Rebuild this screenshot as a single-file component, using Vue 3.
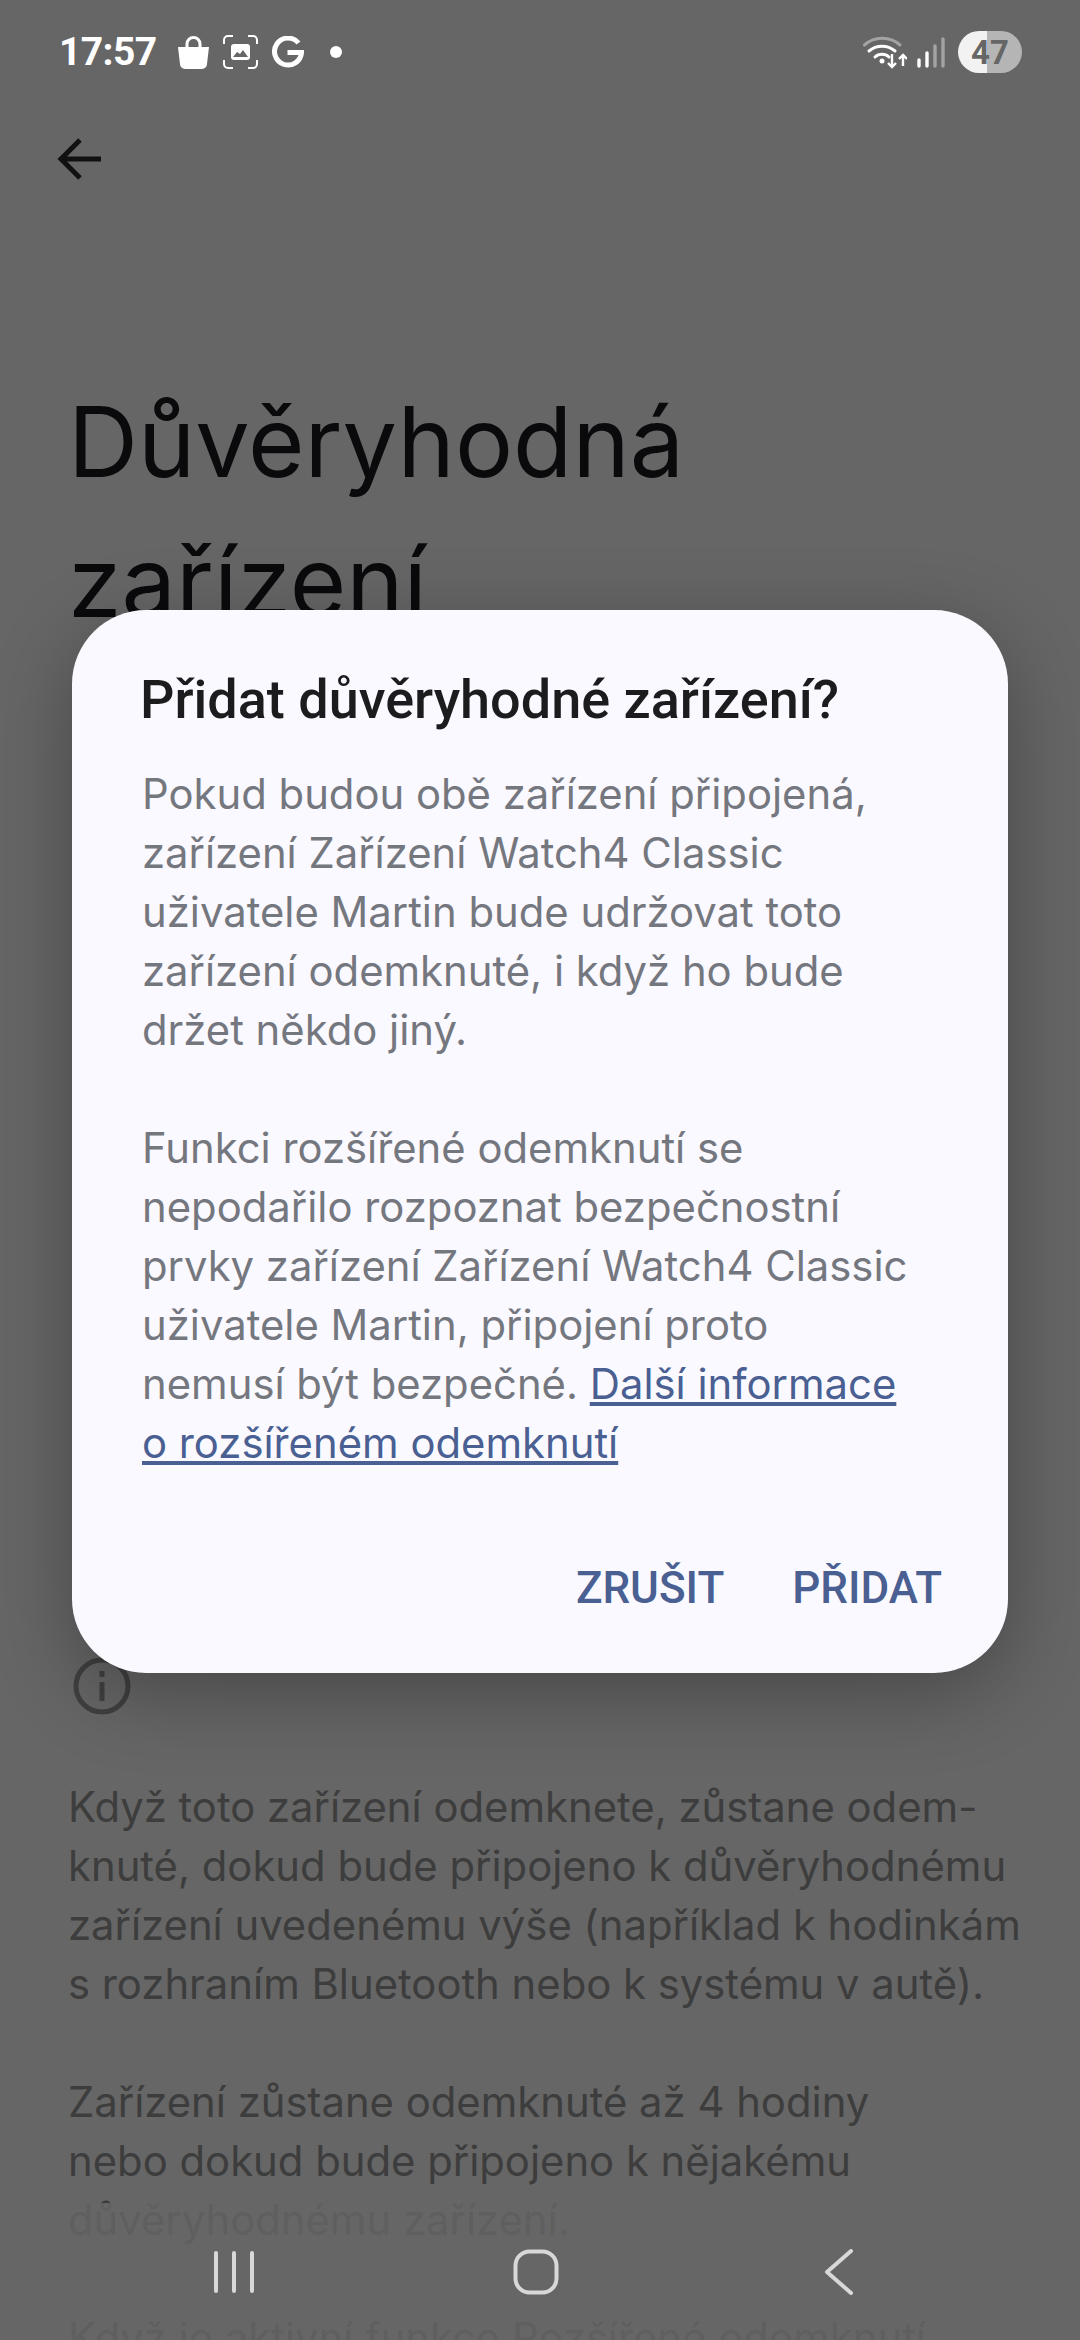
<template>
  <div class="screen">
    <!-- stránka pod dialogem -->
    <main class="page">
      <div class="app-bar">
        <svg class="back-icon" width="48" height="46" viewBox="0 0 48 46">
          <path d="M45 23H5M24 4 5 23l19 19" fill="none" stroke="#2b2b2b" stroke-width="5" />
        </svg>
      </div>
      <h1 class="page-title">Důvěryhodná zařízení</h1>
      <div class="hidden-gap"></div>
      <svg class="info-icon" width="58" height="58" viewBox="0 0 58 58">
        <circle cx="29" cy="29" r="26" fill="none" stroke="#a0a0a0" stroke-width="5" />
        <path d="M29 25v19M29 14v6" fill="none" stroke="#a0a0a0" stroke-width="5" />
      </svg>
      <p v-for="text in pageTexts" :key="text" class="page-text">{{ text }}</p>
    </main>

    <div class="scrim"></div>

    <header class="status-bar">
      <div class="status-left">
        <span class="clock">17:57</span>
        <svg width="31" height="33" viewBox="0 0 31 33">
          <path d="M9 12V8a6.500 6.500 0 0 1 13 0v4" fill="none" stroke="#fff" stroke-width="3" />
          <path d="M0 11h31l-2 17a5 5 0 0 1-5 5H7a5 5 0 0 1-5-5z" fill="#fff" />
        </svg>
        <svg width="35" height="34" viewBox="0 0 35 34" class="shot-icon">
          <path d="M1 9V5a4 4 0 0 1 4-4h5M25 1h5a4 4 0 0 1 4 4v4M34 25v4a4 4 0 0 1-4 4h-5M10 33H5a4 4 0 0 1-4-4v-4" fill="none" stroke="#fff" stroke-width="2" />
          <rect x="8" y="9" width="19" height="16" rx="3" fill="#fff" />
          <path d="M10 22l4-5 3 2 3-4 5 7z" fill="#666" />
        </svg>
        <svg width="33" height="32" viewBox="0 0 33 32" class="g-icon">
          <path d="M27.500 7A13.500 13.500 0 1 0 30.500 16.500H16.500" fill="none" stroke="#fff" stroke-width="5" />
        </svg>
        <span class="dot"></span>
      </div>
      <div class="status-right">
        <svg width="44" height="33" viewBox="0 0 44 33">
          <path d="M1.500 9A27 27 0 0 1 37 9" fill="none" stroke="#fff" stroke-opacity=".4" stroke-width="3" stroke-linecap="round" />
          <path d="M6 15A20 20 0 0 1 32 15M12 21A10 10 0 0 1 26 21" fill="none" stroke="#fff" stroke-width="3" stroke-linecap="round" />
          <circle cx="19" cy="25" r="2.500" fill="#fff" />
          <path d="M29 18v13M25 27l4 4 4-4M40 30V19M36 23l4-4 4 4" fill="none" stroke="#fff" stroke-width="2.400" />
        </svg>
        <svg class="signal-icon" width="28" height="31" viewBox="0 0 28 31">
          <path d="M2 29v-6M10 29V16" stroke="#fff" stroke-width="3.400" stroke-linecap="round" />
          <path d="M18 29V9M26 29V2" stroke="#fff" stroke-opacity=".4" stroke-width="3.400" stroke-linecap="round" />
        </svg>
        <div class="battery"><span>47</span></div>
      </div>
    </header>

    <section class="dialog">
      <h2 class="dialog-title">Přidat důvěryhodné zařízení?</h2>
      <p class="dialog-text">Pokud budou obě zařízení připojená,<br />zařízení Zařízení Watch4 Classic<br />uživatele Martin bude udržovat toto<br />zařízení odemknuté, i když ho bude<br />držet někdo jiný.</p>
      <p class="dialog-text">Funkci rozšířené odemknutí se<br />nepodařilo rozpoznat bezpečnostní<br />prvky zařízení Zařízení Watch4 Classic<br />uživatele Martin, připojení proto<br />nemusí být bezpečné. <a class="more-link">Další informace<br />o rozšířeném odemknutí</a></p>
      <div class="dialog-actions">
        <button class="action">ZRUŠIT</button>
        <button class="action">PŘIDAT</button>
      </div>
    </section>

    <nav class="nav-bar">
      <svg width="42" height="42" viewBox="0 0 42 42" class="nav-recents">
        <path d="M3 2v38M21 2v38M39 2v38" stroke="#d8d8d8" stroke-width="4" stroke-linecap="round" />
      </svg>
      <svg width="46" height="46" viewBox="0 0 46 46" class="nav-home">
        <rect x="2.500" y="2.500" width="41" height="41" rx="14" fill="none" stroke="#d8d8d8" stroke-width="4" />
      </svg>
      <svg width="30" height="46" viewBox="0 0 30 46" class="nav-back">
        <path d="M27 2 3 23l24 21" fill="none" stroke="#d8d8d8" stroke-width="4" stroke-linecap="round" stroke-linejoin="round" />
      </svg>
    </nav>
  </div>
</template>

<script setup>
const pageTexts = [
  'Když toto zařízení odemknete, zůstane odem-\nknuté, dokud bude připojeno k důvěryhodnému\nzařízení uvedenému výše (například k hodinkám\ns rozhraním Bluetooth nebo k systému v autě).',
  'Zařízení zůstane odemknuté až 4 hodiny\nnebo dokud bude připojeno k nějakému\ndůvěryhodnému zařízení.',
  'Když je aktivní funkce Rozšířené odemknutí',
];
</script>

<style>
html, body { margin: 0; background: #666; }
</style>

<style scoped>
.screen {
  position: relative;
  width: 1080px;
  height: 2340px;
  overflow: hidden;
  background: #fff;
  font-family: Inter, sans-serif;
}

.page {
  height: 100%;
  padding: 128px 0 0 68px;
  box-sizing: border-box;
}

.app-bar { height: 70px; }
.back-icon { margin: 8px 0 0 -12px; }

.page-title {
  margin: 174px 0 0;
  font-size: 97px;
  font-weight: 400;
  line-height: 140px;
  width: 800px;
  color: #1b1b1f;
}

.hidden-gap { height: 1005px; }
.info-icon { display: block; margin: 0 0 63px 5px; }

.page-text {
  margin: 0 0 59px;
  font-size: 41.8px;
  line-height: 59px;
  white-space: pre-line;
  color: #989898;
}

.scrim {
  position: absolute;
  inset: 0;
  background: rgba(0, 0, 0, 0.6);
}

.status-bar {
  position: absolute;
  top: 34px;
  left: 59px;
  right: 58px;
  height: 36px;
  display: flex;
  justify-content: space-between;
  align-items: center;
}

.status-left, .status-right { display: flex; align-items: center; }

.clock {
  font-family: Roboto, sans-serif;
  font-size: 39px;
  font-weight: 700;
  letter-spacing: -0.6px;
  color: #fff;
  margin-right: 21px;
}

.shot-icon { margin-left: 14px; }
.g-icon { margin-left: 13px; }

.dot {
  width: 12px;
  height: 12px;
  margin-left: 26px;
  border-radius: 50%;
  background: #fff;
}

.signal-icon { margin-left: 10px; }

.battery {
  width: 64px;
  height: 42px;
  margin-left: 13px;
  border-radius: 21px;
  background: linear-gradient(90deg, #f2f2f2 0 45%, #b5b5b5 45% 100%);
  display: flex;
  align-items: center;
  justify-content: center;
}

.battery span {
  font-family: Roboto, sans-serif;
  font-size: 33px;
  font-weight: 700;
  color: #666;
}

.dialog {
  position: absolute;
  top: 610px;
  left: 72px;
  width: 936px;
  height: 1063px;
  box-sizing: border-box;
  padding: 60px 70px 0;
  border-radius: 74px;
  background: #faf9ff;
  box-shadow: 0 20px 80px rgba(0, 0, 0, 0.3);
}

.dialog-title {
  margin: 0 0 35px -2px;
  font-family: Roboto, sans-serif;
  font-size: 54px;
  font-weight: 500;
  line-height: 60px;
  color: #1c1c1e;
}

.dialog-text {
  margin: 0 0 59px;
  font-size: 41.8px;
  line-height: 59px;
  white-space: nowrap;
  color: #75777f;
}

.more-link {
  color: #4a5f92;
  text-decoration: underline;
}

.dialog-actions {
  display: flex;
  justify-content: flex-end;
  gap: 68px;
  margin: 89px -4px 0 0;
}

.action {
  padding: 0;
  border: 0;
  background: none;
  font-family: Roboto, sans-serif;
  font-size: 44px;
  font-weight: 500;
  color: #4a5f92;
}

.nav-bar {
  position: absolute;
  left: 0;
  right: 0;
  bottom: 0;
  height: 137px;
  display: flex;
  align-items: center;
  padding-left: 213px;
  box-sizing: border-box;
  background: rgba(102, 102, 102, 0.82);
}

.nav-home { margin-left: 258px; }
.nav-back { margin-left: 265px; }
</style>
